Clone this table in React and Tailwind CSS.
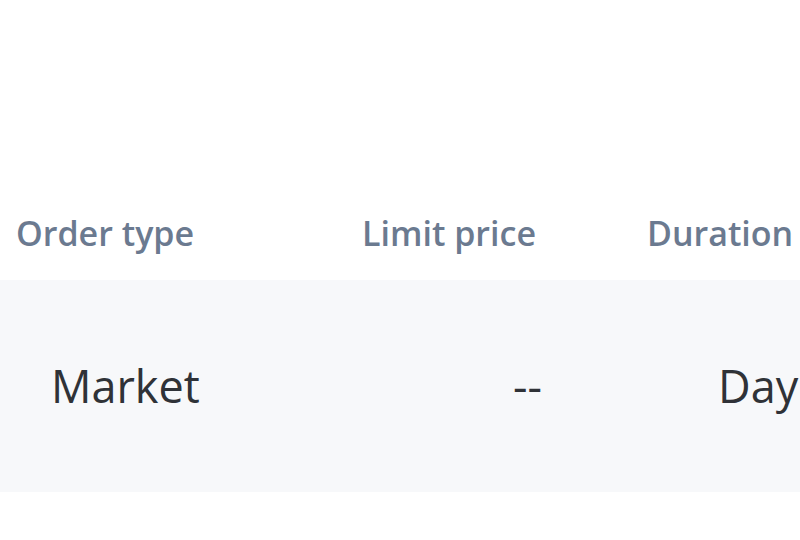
export default function App() {
  const font = { fontFamily: '"Open Sans", sans-serif' };
  return (
    <div className="w-[800px] h-[540px] bg-white overflow-hidden" style={font}>
      <div className="pt-[206px]">
        <div className="flex h-[74px] items-center pb-[20px] text-[34px] font-semibold text-[#6b7a90] whitespace-nowrap">
          <div className="w-[300px] pl-[16px]">Order type</div>
          <div className="w-[236px] text-right">Limit price</div>
          <div className="pl-[111px]">Duration</div>
        </div>
        <div className="flex h-[212px] items-center bg-[#f7f8fa] text-[45px] text-[#2f3237] whitespace-nowrap">
          <div className="w-[300px] pl-[51px]">Market</div>
          <div className="w-[242px] text-right">--</div>
          <div className="pl-[176px]">Day</div>
        </div>
      </div>
    </div>
  );
}
